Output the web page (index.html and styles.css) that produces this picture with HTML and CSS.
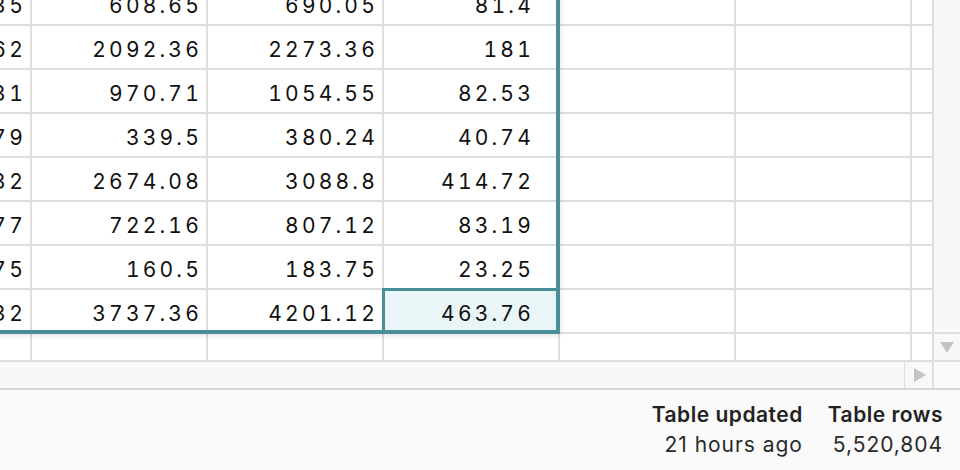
FILE: index.html
```html
<!DOCTYPE html>
<html lang="en">
<head>
<meta charset="utf-8">
<title>Sheet</title>
<link rel="stylesheet" href="styles.css">
</head>
<body>
<div class="app">
  <div class="sheet">
    <div class="viewport">
      <div class="grid">
        <div class="cell">473.35</div><div class="cell">608.65</div><div class="cell">690.05</div><div class="cell diff">81.4</div><div class="cell"></div><div class="cell"></div><div class="cell"></div>
        <div class="cell">1911.62</div><div class="cell">2092.36</div><div class="cell">2273.36</div><div class="cell diff">181</div><div class="cell"></div><div class="cell"></div><div class="cell"></div>
        <div class="cell">887.31</div><div class="cell">970.71</div><div class="cell">1054.55</div><div class="cell diff">82.53</div><div class="cell"></div><div class="cell"></div><div class="cell"></div>
        <div class="cell">298.79</div><div class="cell">339.5</div><div class="cell">380.24</div><div class="cell diff">40.74</div><div class="cell"></div><div class="cell"></div><div class="cell"></div>
        <div class="cell">2259.32</div><div class="cell">2674.08</div><div class="cell">3088.8</div><div class="cell diff">414.72</div><div class="cell"></div><div class="cell"></div><div class="cell"></div>
        <div class="cell">637.77</div><div class="cell">722.16</div><div class="cell">807.12</div><div class="cell diff">83.19</div><div class="cell"></div><div class="cell"></div><div class="cell"></div>
        <div class="cell">137.75</div><div class="cell">160.5</div><div class="cell">183.75</div><div class="cell diff">23.25</div><div class="cell"></div><div class="cell"></div><div class="cell"></div>
        <div class="cell">3273.32</div><div class="cell">3737.36</div><div class="cell">4201.12</div><div class="cell diff active">463.76</div><div class="cell"></div><div class="cell"></div><div class="cell"></div>
        <div class="cell"></div><div class="cell"></div><div class="cell"></div><div class="cell"></div><div class="cell"></div><div class="cell"></div><div class="cell"></div>
        <div class="selection"></div>
      </div>
    </div>
    <div class="vscroll">
      <div class="vtrack"></div>
      <div class="vbtn">
        <svg width="14" height="11" viewBox="0 0 14 11"><polygon points="0,0 14,0 7,11" fill="#c3c3c3"/></svg>
      </div>
    </div>
  </div>
  <div class="hbar">
    <div class="htrack"></div>
    <div class="hbtn">
      <svg width="12" height="14" viewBox="0 0 12 14"><polygon points="0,0 12,7 0,14" fill="#c3c3c3"/></svg>
    </div>
    <div class="corner"></div>
  </div>
  <footer class="status">
    <div class="stat">
      <div class="stat-label">Table updated</div>
      <div class="stat-value">21 hours ago</div>
    </div>
    <div class="stat">
      <div class="stat-label">Table rows</div>
      <div class="stat-value">5,520,804</div>
    </div>
  </footer>
</div>
</body>
</html>
```

FILE: styles.css
```css
html, body {
  margin: 0;
  padding: 0;
  background: #ffffff;
}

.app {
  width: 960px;
  height: 470px;
  display: flex;
  flex-direction: column;
  overflow: hidden;
  font-family: Inter, "Noto Sans", sans-serif;
  color: #111;
}

.sheet {
  height: 360px;
  display: flex;
  flex: none;
}

.viewport {
  width: 932px;
  height: 360px;
  overflow: hidden;
  background: #fff;
}

.grid {
  position: relative;
  margin-left: -144px;
  margin-top: -18px;
  display: grid;
  grid-template-columns: repeat(7, 176px);
  grid-auto-rows: 44px;
  width: max-content;
}

.cell {
  position: relative;
  box-sizing: border-box;
  border-right: 2px solid #dedede;
  border-bottom: 2px solid #dedede;
  padding: 5px 4px 0 0;
  line-height: 37px;
  font-size: 21px;
  font-variant-numeric: tabular-nums;
  letter-spacing: 3.2px;
  text-align: right;
  white-space: nowrap;
  color: #111;
}

.cell.diff {
  padding-right: 24px;
}

.cell.active {
  background: #eaf5f7;
}

.cell.active::after {
  content: "";
  position: absolute;
  top: -2px;
  left: -2px;
  right: -2px;
  bottom: -2px;
  border: 3px solid #4a8e9a;
  z-index: 2;
}

.selection {
  position: absolute;
  left: -20px;
  top: -20px;
  width: 724px;
  height: 372px;
  box-sizing: border-box;
  border: 4px solid #4a8e9a;
  box-shadow: 0 1px 6px rgba(0, 0, 0, 0.14);
  pointer-events: none;
  z-index: 3;
}

.vscroll {
  width: 28px;
  box-sizing: border-box;
  border-left: 2px solid #dedede;
  display: flex;
  flex-direction: column;
  background: #f8f8f8;
}

.vtrack {
  flex: 1;
}

.vbtn {
  height: 28px;
  box-sizing: border-box;
  border-top: 2px solid #dedede;
  display: flex;
  align-items: center;
  justify-content: center;
  padding-top: 1px;
}

.hbar {
  height: 30px;
  box-sizing: border-box;
  border-top: 2px solid #dedede;
  border-bottom: 2px solid #d6d6d6;
  background: #f8f8f8;
  display: flex;
  flex: none;
}

.htrack {
  flex: 1;
}

.hbtn {
  width: 28px;
  box-sizing: border-box;
  border-left: 1px solid #dedede;
  display: flex;
  align-items: center;
  justify-content: center;
  padding-left: 3px;
}

.corner {
  width: 28px;
  box-sizing: border-box;
  border-left: 2px solid #dedede;
  background: #fafafa;
}

.status {
  flex: 1;
  background: #fafafa;
  display: flex;
  justify-content: flex-end;
  gap: 25px;
  padding: 10px 17px 0 0;
  font-size: 21px;
  line-height: 30px;
}

.stat {
  text-align: right;
}

.stat-label {
  font-weight: 600;
  color: #222;
  letter-spacing: 0.5px;
}

.stat-value {
  color: #2a2a2a;
  letter-spacing: 0.95px;
}
```
